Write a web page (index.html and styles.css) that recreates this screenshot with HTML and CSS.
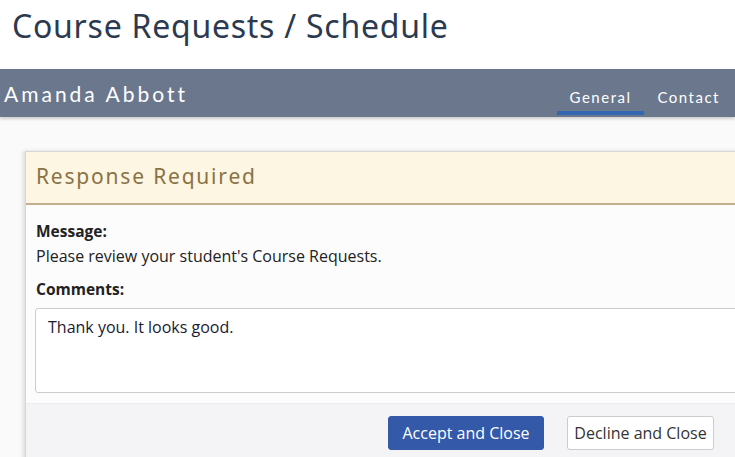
FILE: index.html
```html
<!DOCTYPE html>
<html>
<head>
<meta charset="utf-8">
<link rel="stylesheet" href="styles.css">
</head>
<body>
<div class="page">
  <h1 class="title">Course Requests / Schedule</h1>
  <div class="bar">
    <div class="name">Amanda Abbott</div>
    <nav class="tabs">
      <span class="tab active">General</span>
      <span class="tab">Contact</span>
    </nav>
  </div>
  <div class="content">
    <div class="card">
      <div class="card-head">Response Required</div>
      <div class="card-body">
        <div class="label">Message:</div>
        <div class="msg">Please review your student's Course Requests.</div>
        <div class="label label-c">Comments:</div>
        <div class="textarea">Thank you. It looks good.</div>
      </div>
      <div class="card-foot">
        <button class="btn btn-primary">Accept and Close</button>
        <button class="btn btn-default">Decline and Close</button>
      </div>
    </div>
  </div>
</div>
</body>
</html>
```
FILE: styles.css
```css
html, body { margin: 0; padding: 0; }
body { background: #fff; overflow: hidden; width: 735px; height: 457px; }
.page { width: 735px; height: 457px; overflow: hidden; display: flex; flex-direction: column; }
.page > * { flex-shrink: 0; }
.title {
  margin: 0;
  height: 69px;
  box-sizing: border-box;
  padding: 5px 0 0 12px;
  font-family: "Noto Sans", sans-serif;
  font-weight: 400;
  font-size: 32px;
  line-height: 42px;
  color: #2c3a4f;
  letter-spacing: 0.75px;
}
.bar {
  height: 48px;
  background: #6b778d;
  display: flex;
  justify-content: space-between;
  align-items: stretch;
  box-shadow: 0 2px 3px rgba(0,0,0,0.18);
  position: relative;
  z-index: 2;
}
.name {
  font-family: "Lato", sans-serif;
  color: #fff;
  font-size: 21px;
  letter-spacing: 3px;
  padding: 12px 0 0 4px;
}
.tabs { display: flex; padding-right: 2px; }
.tab {
  font-family: "Lato", sans-serif;
  color: #fff;
  font-size: 15px;
  letter-spacing: 1.5px;
  padding: 19px 13px 0;
  box-sizing: border-box;
  height: 46px;
}
.tab.active { border-bottom: 4px solid #3366b0; margin-bottom: 2px; height: 46px; }
.content {
  flex: 1;
  background: #fafafa;
  padding: 34px 0 0 25px;
}
.card {
  width: 760px;
  border: 1px solid #d6d6d6;
  border-right: none;
  box-shadow: -2px 0 4px rgba(0,0,0,0.12);
  background: #fcfcfc;
}
.card-head {
  height: 53px;
  box-sizing: border-box;
  background: #fdf6e2;
  border-bottom: 2px solid #c3af8e;
  font-family: "Noto Sans", sans-serif;
  font-size: 21px;
  letter-spacing: 1.8px;
  color: #8a7245;
  padding: 10px 0 0 10px;
}
.card-body {
  padding: 16px 0 10px 10px;
  font-family: "Open Sans", sans-serif;
  font-size: 16px;
  color: #222;
}
.label { font-weight: 700; line-height: 20px; font-size: 15.5px; }
.msg { line-height: 20px; margin-top: 5px; }
.label-c { margin-top: 13px; }
.textarea {
  margin-top: 9px;
  margin-left: -1px;
  height: 85px;
  box-sizing: border-box;
  background: #fff;
  border: 1px solid #cccccc;
  border-radius: 3px;
  padding: 8px 12px;
  color: #1a1a33;
  line-height: 20px;
}
.card-foot {
  background: #f4f4f6;
  border-top: 1px solid #ebebf0;
  height: 60px;
  display: flex;
  gap: 23px;
  padding: 12px 0 0 362px;
  box-sizing: border-box;
}
.btn {
  font-family: "Open Sans", sans-serif;
  font-size: 16px;
  height: 34px;
  border-radius: 3px;
  padding: 0 6px;
  cursor: pointer;
}
.btn-primary { background: #3359a8; color: #fff; border: 1px solid #3359a8; width: 156px; }
.btn-default { background: #fff; color: #333; border: 1px solid #cccccc; width: 147px; }
```
